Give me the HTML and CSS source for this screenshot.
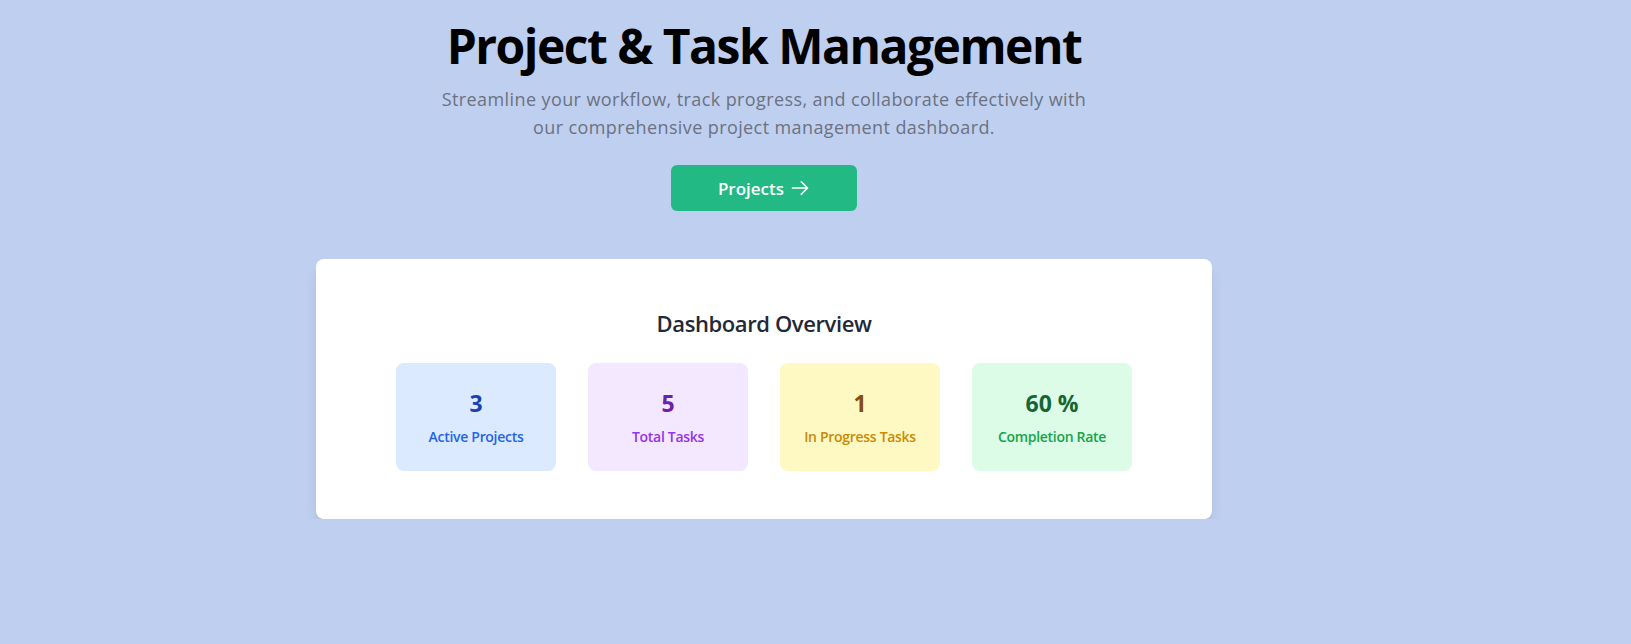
FILE: index.html
```html
<!DOCTYPE html>
<html lang="en">
<head>
<meta charset="utf-8">
<title>Project &amp; Task Management</title>
<link rel="stylesheet" href="styles.css">
</head>
<body>
<main class="page">
  <header class="hero">
    <h1 class="hero-title">Project &amp; Task Management</h1>
    <p class="hero-subtitle">Streamline your workflow, track progress, and collaborate effectively with our comprehensive project management dashboard.</p>
    <a class="btn-primary" href="#">
      <span>Projects</span>
      <svg class="btn-icon" viewBox="0 0 24 24" fill="none" stroke="currentColor" stroke-width="2" stroke-linecap="round" stroke-linejoin="round" aria-hidden="true"><path d="M13.5 4.5 21 12m0 0-7.5 7.5M21 12H3"/></svg>
    </a>
  </header>

  <section class="overview">
    <h2 class="overview-title">Dashboard Overview</h2>
    <div class="stats">
      <div class="stat stat-blue">
        <div class="stat-value">3</div>
        <div class="stat-label">Active Projects</div>
      </div>
      <div class="stat stat-purple">
        <div class="stat-value">5</div>
        <div class="stat-label">Total Tasks</div>
      </div>
      <div class="stat stat-yellow">
        <div class="stat-value">1</div>
        <div class="stat-label">In Progress Tasks</div>
      </div>
      <div class="stat stat-green">
        <div class="stat-value">60 %</div>
        <div class="stat-label">Completion Rate</div>
      </div>
    </div>
  </section>
</main>
</body>
</html>
```

FILE: styles.css
```css
* { box-sizing: border-box; }

html, body {
  margin: 0;
  padding: 0;
  background: #bfcff0;
  min-height: 100%;
}

body {
  font-family: "Open Sans", "Noto Sans", "Liberation Sans", sans-serif;
  color: #111827;
}

.page {
  width: 1528px;
  padding-top: 22px;
  display: flex;
  flex-direction: column;
  align-items: center;
}

.hero {
  display: flex;
  flex-direction: column;
  align-items: center;
  text-align: center;
}

.hero-title {
  margin: 0 0 15px;
  font-size: 48px;
  line-height: 48px;
  font-weight: 700;
  color: #000;
  letter-spacing: -1.5px;
}

.hero-subtitle {
  margin: 0;
  max-width: 664px;
  font-size: 18px;
  line-height: 28px;
  letter-spacing: 0.4px;
  color: #6b7280;
}

.btn-primary {
  margin-top: 24px;
  display: flex;
  align-items: center;
  justify-content: center;
  gap: 6px;
  width: 186px;
  height: 46px;
  border-radius: 6px;
  background: #22b984;
  color: #fff;
  text-decoration: none;
  font-size: 17px;
  font-weight: 600;
}

.btn-icon {
  width: 20px;
  height: 20px;
}

.overview {
  margin-top: 48px;
  width: 896px;
  padding: 48px;
  background: #fff;
  border-radius: 8px;
  box-shadow: 0 10px 15px -3px rgba(0, 0, 0, 0.1), 0 4px 6px -4px rgba(0, 0, 0, 0.1);
}

.overview-title {
  margin: 0 0 24px;
  text-align: center;
  font-size: 22px;
  line-height: 32px;
  font-weight: 600;
  letter-spacing: -0.4px;
  color: #1f2937;
}

.stats {
  display: flex;
  justify-content: center;
  gap: 32px;
}

.stat {
  width: 160px;
  padding: 24px 0;
  border-radius: 8px;
  text-align: center;
}

.stat-value {
  font-size: 23px;
  line-height: 32px;
  font-weight: 700;
}

.stat-label {
  margin-top: 8px;
  font-size: 14px;
  line-height: 20px;
  font-weight: 600;
  letter-spacing: -0.3px;
}

.stat-blue { background: #dbeafe; }
.stat-blue .stat-value { color: #1e40af; }
.stat-blue .stat-label { color: #2563eb; }

.stat-purple { background: #f3e8ff; }
.stat-purple .stat-value { color: #6b21a8; }
.stat-purple .stat-label { color: #9333ea; }

.stat-yellow { background: #fef9c3; }
.stat-yellow .stat-value { color: #854d0e; }
.stat-yellow .stat-label { color: #ca8a04; }

.stat-green { background: #dcfce7; }
.stat-green .stat-value { color: #166534; }
.stat-green .stat-label { color: #16a34a; }
```
